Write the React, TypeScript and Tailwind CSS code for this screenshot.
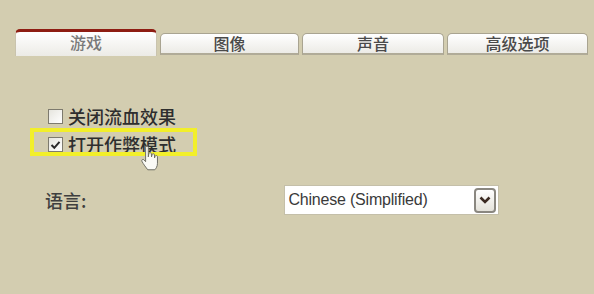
import React from "react";

const cjk = { fontFamily: '"Noto Sans CJK SC", "Liberation Sans", sans-serif' };

function Tab({ label, active, className }: { label: string; active?: boolean; className: string }) {
  return (
    <div
      className={
        "flex items-start justify-center rounded-t-[5px] bg-gradient-to-b from-white to-[#ecebe6] " +
        (active
          ? "h-[27px] border-t-[3px] border-x border-t-[#8e1d12] border-x-[#c9c3ad] pt-[1px] text-[#7a7a7a] "
          : "h-[22px] border border-b-2 border-[#a9a491] border-b-[#b0ab98] pt-0 text-[#4a4a4a] ") +
        className
      }
    >
      <span className="text-[16px] font-medium leading-[18px]" style={cjk}>
        {label}
      </span>
    </div>
  );
}

function Check({ checked, label }: { checked?: boolean; label: string }) {
  return (
    <div className="flex h-[19px] items-center">
      <div className="ml-[48px] flex h-[15px] w-[15px] items-center justify-center border border-[#7d7a6e] bg-gradient-to-br from-[#e6e5de] to-white">
        {checked && (
          <svg width="11" height="10" viewBox="0 0 11 10">
            <path d="M1.5 5 L4.3 7.8 L9.5 1.8" fill="none" stroke="#2a2a2a" strokeWidth="2" />
          </svg>
        )}
      </div>
      <span className="ml-[5px] text-[18px] font-medium leading-[19px] text-[#2e2e2e]" style={cjk}>
        {label}
      </span>
    </div>
  );
}

export default function App() {
  return (
    <div className="relative h-[294px] w-[594px] overflow-hidden bg-[#d3cdb0]">
      <div className="flex items-end pl-[15px] pt-[29px]">
        <Tab label="游戏" active className="w-[142px]" />
        <Tab label="图像" className="ml-[3px] mb-[1px] w-[139px]" />
        <Tab label="声音" className="ml-[3px] mb-[1px] w-[142px]" />
        <Tab label="高级选项" className="ml-[3px] mb-[1px] w-[141px]" />
      </div>

      <div className="mt-[51px] flex flex-col gap-[9px]">
        <Check label="关闭流血效果" />
        <Check checked label="打开作弊模式" />
      </div>

      <div className="mt-[31px] flex items-center">
        <span className="ml-[45px] text-[18px] font-medium leading-[22px] text-[#3f3f3f]" style={cjk}>
          语言:
        </span>
        <div className="ml-[198px] flex h-[30px] w-[215px] items-center justify-between border border-[#c4bfa9] bg-white pl-[3px] pr-[2px]">
          <span className="text-[16px] tracking-[-0.2px] text-[#3a3a3a]" style={{ fontFamily: '"Liberation Sans", sans-serif' }}>
            Chinese (Simplified)
          </span>
          <div className="flex h-[25px] w-[22px] items-center justify-center rounded-[4px] border-2 border-[#8a8780] bg-gradient-to-b from-white to-[#e4e2da]">
            <svg width="12" height="8" viewBox="0 0 12 8">
              <path d="M1.5 1.5 L6 6 L10.5 1.5" fill="none" stroke="#3b2a22" strokeWidth="2.6" />
            </svg>
          </div>
        </div>
      </div>

      {/* yellow annotation box */}
      <div className="absolute left-[30px] top-[128px] h-[28px] w-[167px] border-[4px] border-[#f2ef2a]" />

      {/* hand cursor */}
      <svg className="absolute left-[140px] top-[145px]" width="22" height="28" viewBox="0 0 20 26">
        <path
          d="M5 2 C5 0.8 7.5 0.8 7.5 2 L7.5 11 L8 8 C8 6.8 10.3 6.8 10.3 8 L10.5 11 L11 9 C11 7.8 13.2 7.8 13.2 9 L13.3 12 L13.8 10.5 C14 9.5 16 9.5 16 10.8 L16 17 C16 20 14.5 22 13.5 23 L7 23 C5.5 21 3 18 1.5 15 C1 13.8 2.6 12.8 3.5 13.8 L5 15.5 Z"
          fill="#fafaf5"
          stroke="#6a6a60"
          strokeWidth="0.9"
        />
      </svg>
    </div>
  );
}
